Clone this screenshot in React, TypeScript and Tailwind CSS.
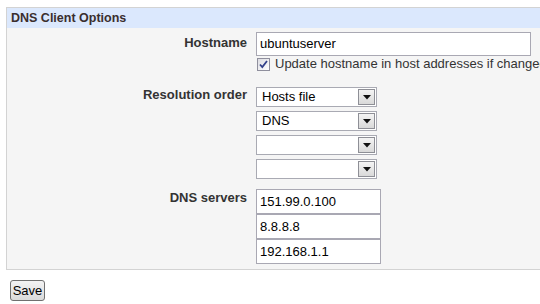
import React from 'react';

const SelectBox = ({ value }: { value: string }) => (
  <div className="flex h-[20px] w-[121px] items-center justify-between border border-[#a9aab3] bg-white pl-[5px] pr-[1px]">
    <span className="text-[13px] leading-[16px] text-black">{value}</span>
    <div className="flex h-[16px] w-[17px] items-center justify-center border border-[#8e8f96] bg-gradient-to-b from-[#f4f4f4] to-[#d9d9d9]">
      <svg width="8" height="5" viewBox="0 0 8 5">
        <path d="M0 0h8L4 4.5z" fill="#111" />
      </svg>
    </div>
  </div>
);

const TextBox = ({ value, width }: { value: string; width: string }) => (
  <div className={`${width} h-[25px] border border-[#a9a8b3] bg-white pl-[3px] text-[13px] leading-[23px] text-black`}>
    {value}
  </div>
);

export default function App() {
  return (
    <div className="h-[304px] w-[540px] overflow-hidden bg-white font-['Liberation_Sans',Arial,sans-serif]">
      <div className="pl-[6px] pt-[7px]">
        <div className="w-[600px] border border-[#d3d3d3] bg-[#f5f5f5]">
          {/* Header */}
          <div className="h-[20px] bg-[#dbe8fd] pl-[4px] text-[12.5px] font-bold leading-[20px] text-[#3a2e2e]">
            DNS Client Options
          </div>

          <div className="grid grid-cols-[240px_1fr] gap-x-[9px] pb-[5px] pt-[4px]">
            {/* Hostname */}
            <div className="pt-[3px] text-right text-[13px] font-bold leading-[16px] text-[#333]">Hostname</div>
            <div>
              <div className="h-[24px] w-[275px] border border-[#a9a8b3] bg-white pl-[3px] text-[13px] leading-[22px] text-black">
                ubuntuserver
              </div>
              <div className="mt-[1px] flex h-[14px] items-center gap-[5px] pl-[1px] whitespace-nowrap">
                <div className="flex h-[13px] w-[13px] items-center justify-center border border-[#8f8f9d] bg-gradient-to-br from-[#dcdce2] to-white">
                  <svg width="9" height="9" viewBox="0 0 9 9">
                    <path d="M1 4.5l2.3 2.6L8 1" stroke="#33418a" strokeWidth="1.8" fill="none" />
                  </svg>
                </div>
                <span className="text-[13px] leading-[14px] text-[#333]">Update hostname in host addresses if changed</span>
              </div>
            </div>

            {/* Resolution order */}
            <div className="mt-[16px] text-right text-[13px] font-bold leading-[16px] text-[#333]">Resolution order</div>
            <div className="mt-[16px] flex flex-col gap-[4px]">
              <SelectBox value="Hosts file" />
              <SelectBox value="DNS" />
              <SelectBox value="" />
              <SelectBox value="" />
            </div>

            {/* DNS servers */}
            <div className="mt-[10px] pt-[1px] text-right text-[13px] font-bold leading-[16px] text-[#333]">DNS servers</div>
            <div className="mt-[10px] flex flex-col">
              <TextBox value="151.99.0.100" width="w-[125px]" />
              <TextBox value="8.8.8.8" width="w-[125px]" />
              <TextBox value="192.168.1.1" width="w-[125px]" />
            </div>
          </div>
        </div>
      </div>

      <div className="pl-[10px] pt-[8px]">
        <button className="h-[21px] w-[35px] rounded-[3px] border border-[#707070] bg-gradient-to-b from-[#f3f3f3] to-[#dadada] text-[13px] leading-[19px] text-black">
          Save
        </button>
      </div>
    </div>
  );
}
